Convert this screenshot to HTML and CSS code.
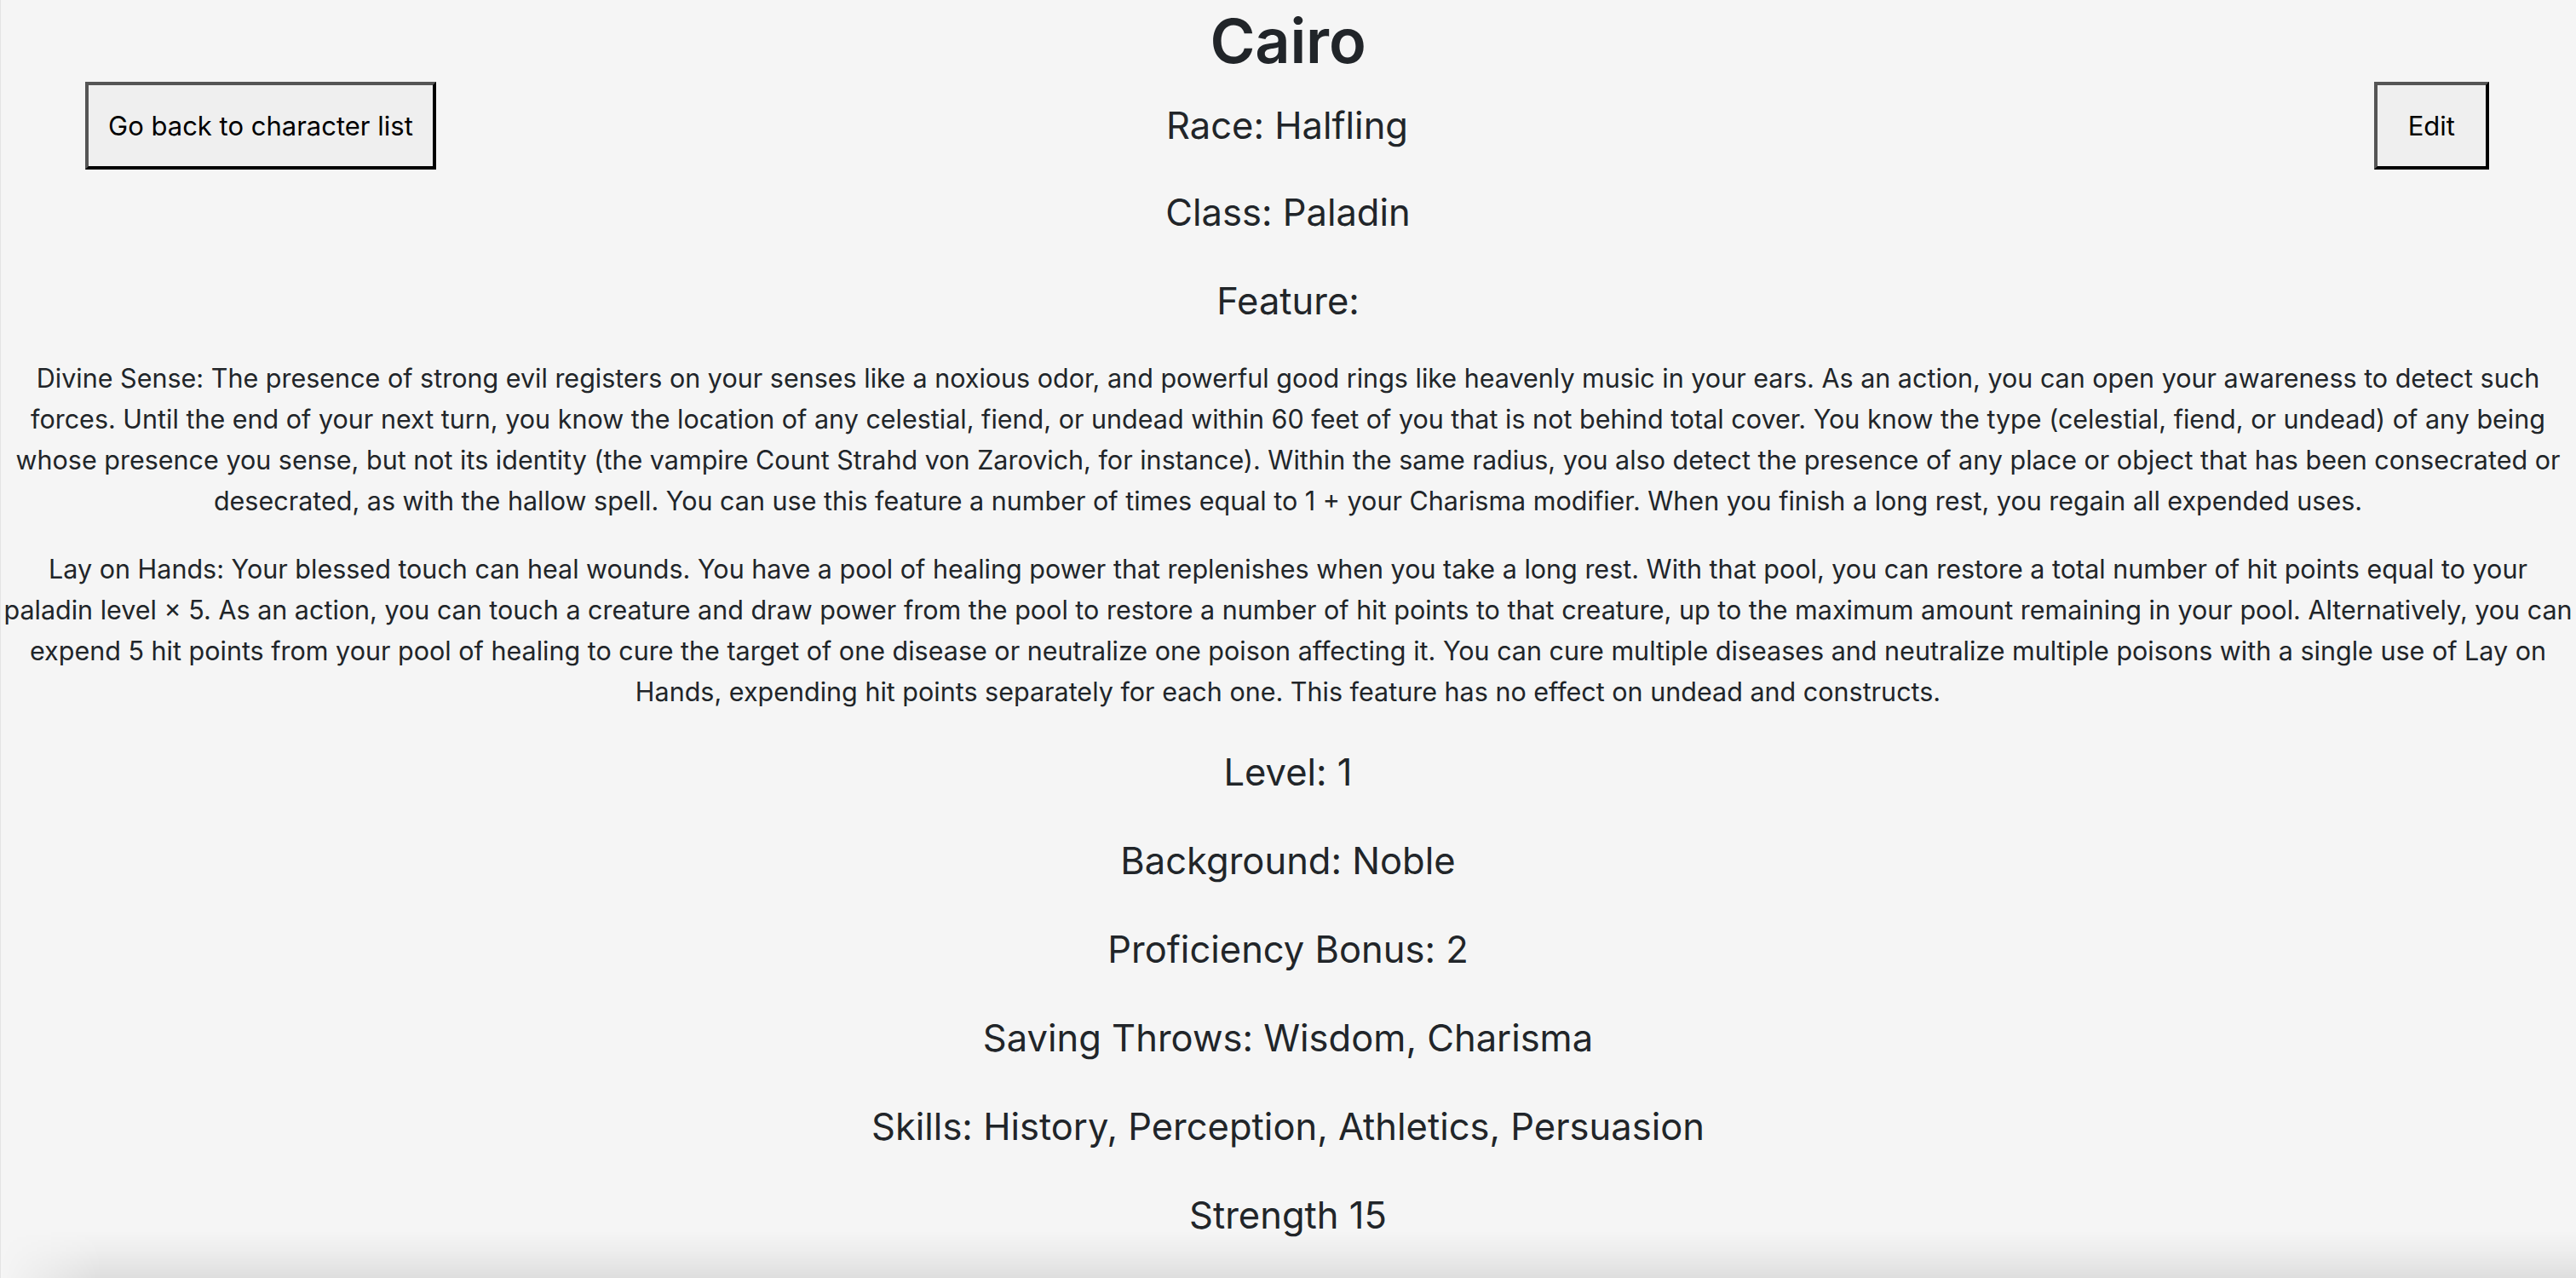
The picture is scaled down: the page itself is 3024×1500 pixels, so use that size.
FILE: index.html
```html
<!DOCTYPE html>
<html lang="en">
<head>
<meta charset="utf-8">
<title>Cairo</title>
<link rel="stylesheet" href="styles.css">
</head>
<body>
<main class="sheet">
  <h1 class="name">Cairo</h1>
  <div class="topbar">
    <div class="topbar-left"><button class="btn" type="button">Go back to character list</button></div>
    <h4 class="stat stat-inline">Race: Halfling</h4>
    <div class="topbar-right"><button class="btn btn-edit" type="button">Edit</button></div>
  </div>
  <h4 class="stat">Class: Paladin</h4>
  <h4 class="stat feature-title">Feature:</h4>
  <p class="feature">Divine Sense: The presence of strong evil registers on your senses like a noxious odor, and powerful good rings like heavenly music in your ears. As an action, you can open your awareness to detect such forces. Until the end of your next turn, you know the location of any celestial, fiend, or undead within 60 feet of you that is not behind total cover. You know the type (celestial, fiend, or undead) of any being whose presence you sense, but not its identity (the vampire Count Strahd von Zarovich, for instance). Within the same radius, you also detect the presence of any place or object that has been consecrated or desecrated, as with the hallow spell. You can use this feature a number of times equal to 1 + your Charisma modifier. When you finish a long rest, you regain all expended uses.</p>
  <p class="feature">Lay on Hands: Your blessed touch can heal wounds. You have a pool of healing power that replenishes when you take a long rest. With that pool, you can restore a total number of hit points equal to your paladin level × 5. As an action, you can touch a creature and draw power from the pool to restore a number of hit points to that creature, up to the maximum amount remaining in your pool. Alternatively, you can expend 5 hit points from your pool of healing to cure the target of one disease or neutralize one poison affecting it. You can cure multiple diseases and neutralize multiple poisons with a single use of Lay on Hands, expending hit points separately for each one. This feature has no effect on undead and constructs.</p>
  <h4 class="stat stat-first">Level: 1</h4>
  <h4 class="stat">Background: Noble</h4>
  <h4 class="stat">Proficiency Bonus: 2</h4>
  <h4 class="stat">Saving Throws: Wisdom, Charisma</h4>
  <h4 class="stat">Skills: History, Perception, Athletics, Persuasion</h4>
  <h4 class="stat stat-last">Strength 15</h4>
</main>
<div class="shade" aria-hidden="true"></div>
</body>
</html>
```
FILE: styles.css
```css
html, body {
  margin: 0;
  padding: 0;
}

body {
  background: #f5f5f5;
  color: #212529;
  font-family: Inter, "Liberation Sans", Arial, sans-serif;
  box-shadow: inset 1px 0 0 #e4e4e4;
  min-height: 1500px;
  box-sizing: border-box;
}

.sheet {
  text-align: center;
}

.name {
  margin: 0;
  font-size: 72px;
  font-weight: 600;
  line-height: 96px;
  letter-spacing: -0.2px;
}

.topbar {
  display: grid;
  grid-template-columns: 1fr auto 1fr;
  align-items: center;
  padding: 0 102px 0 100px;
  margin-bottom: 21px;
}

.topbar-left {
  justify-self: start;
}

.topbar-right {
  justify-self: end;
}

.stat {
  margin: 0 0 46px;
  font-size: 43.5px;
  font-weight: 400;
  line-height: 58px;
}

.stat-inline {
  margin: 0;
  position: relative;
  top: -1px;
}

.feature-title {
  margin-bottom: 38px;
}

.feature {
  max-width: 3019px;
  margin: 0 auto 32px;
  font-size: 30.5px;
  line-height: 48px;
}

.stat-first {
  margin-top: 41px;
}

.stat-last {
  margin-bottom: 0;
}

.btn {
  display: inline-block;
  margin: 0;
  padding: 24px 23px;
  font-family: Inter, "Liberation Sans", Arial, sans-serif;
  font-size: 31px;
  line-height: 47px;
  color: #000;
  background: #efefef;
  border: 4px solid;
  border-color: #555 #000 #000 #555;
  border-radius: 0;
}

.btn-edit {
  padding-left: 36px;
  padding-right: 36px;
}

.shade {
  position: fixed;
  left: 0;
  right: 0;
  bottom: 0;
  height: 56px;
  pointer-events: none;
  background: linear-gradient(to bottom, rgba(0, 0, 0, 0), rgba(0, 0, 0, 0.03) 45%, rgba(0, 0, 0, 0.09));
  -webkit-mask-image: linear-gradient(to right, transparent 0, #000 120px);
  mask-image: linear-gradient(to right, transparent 0, #000 120px);
}
```
